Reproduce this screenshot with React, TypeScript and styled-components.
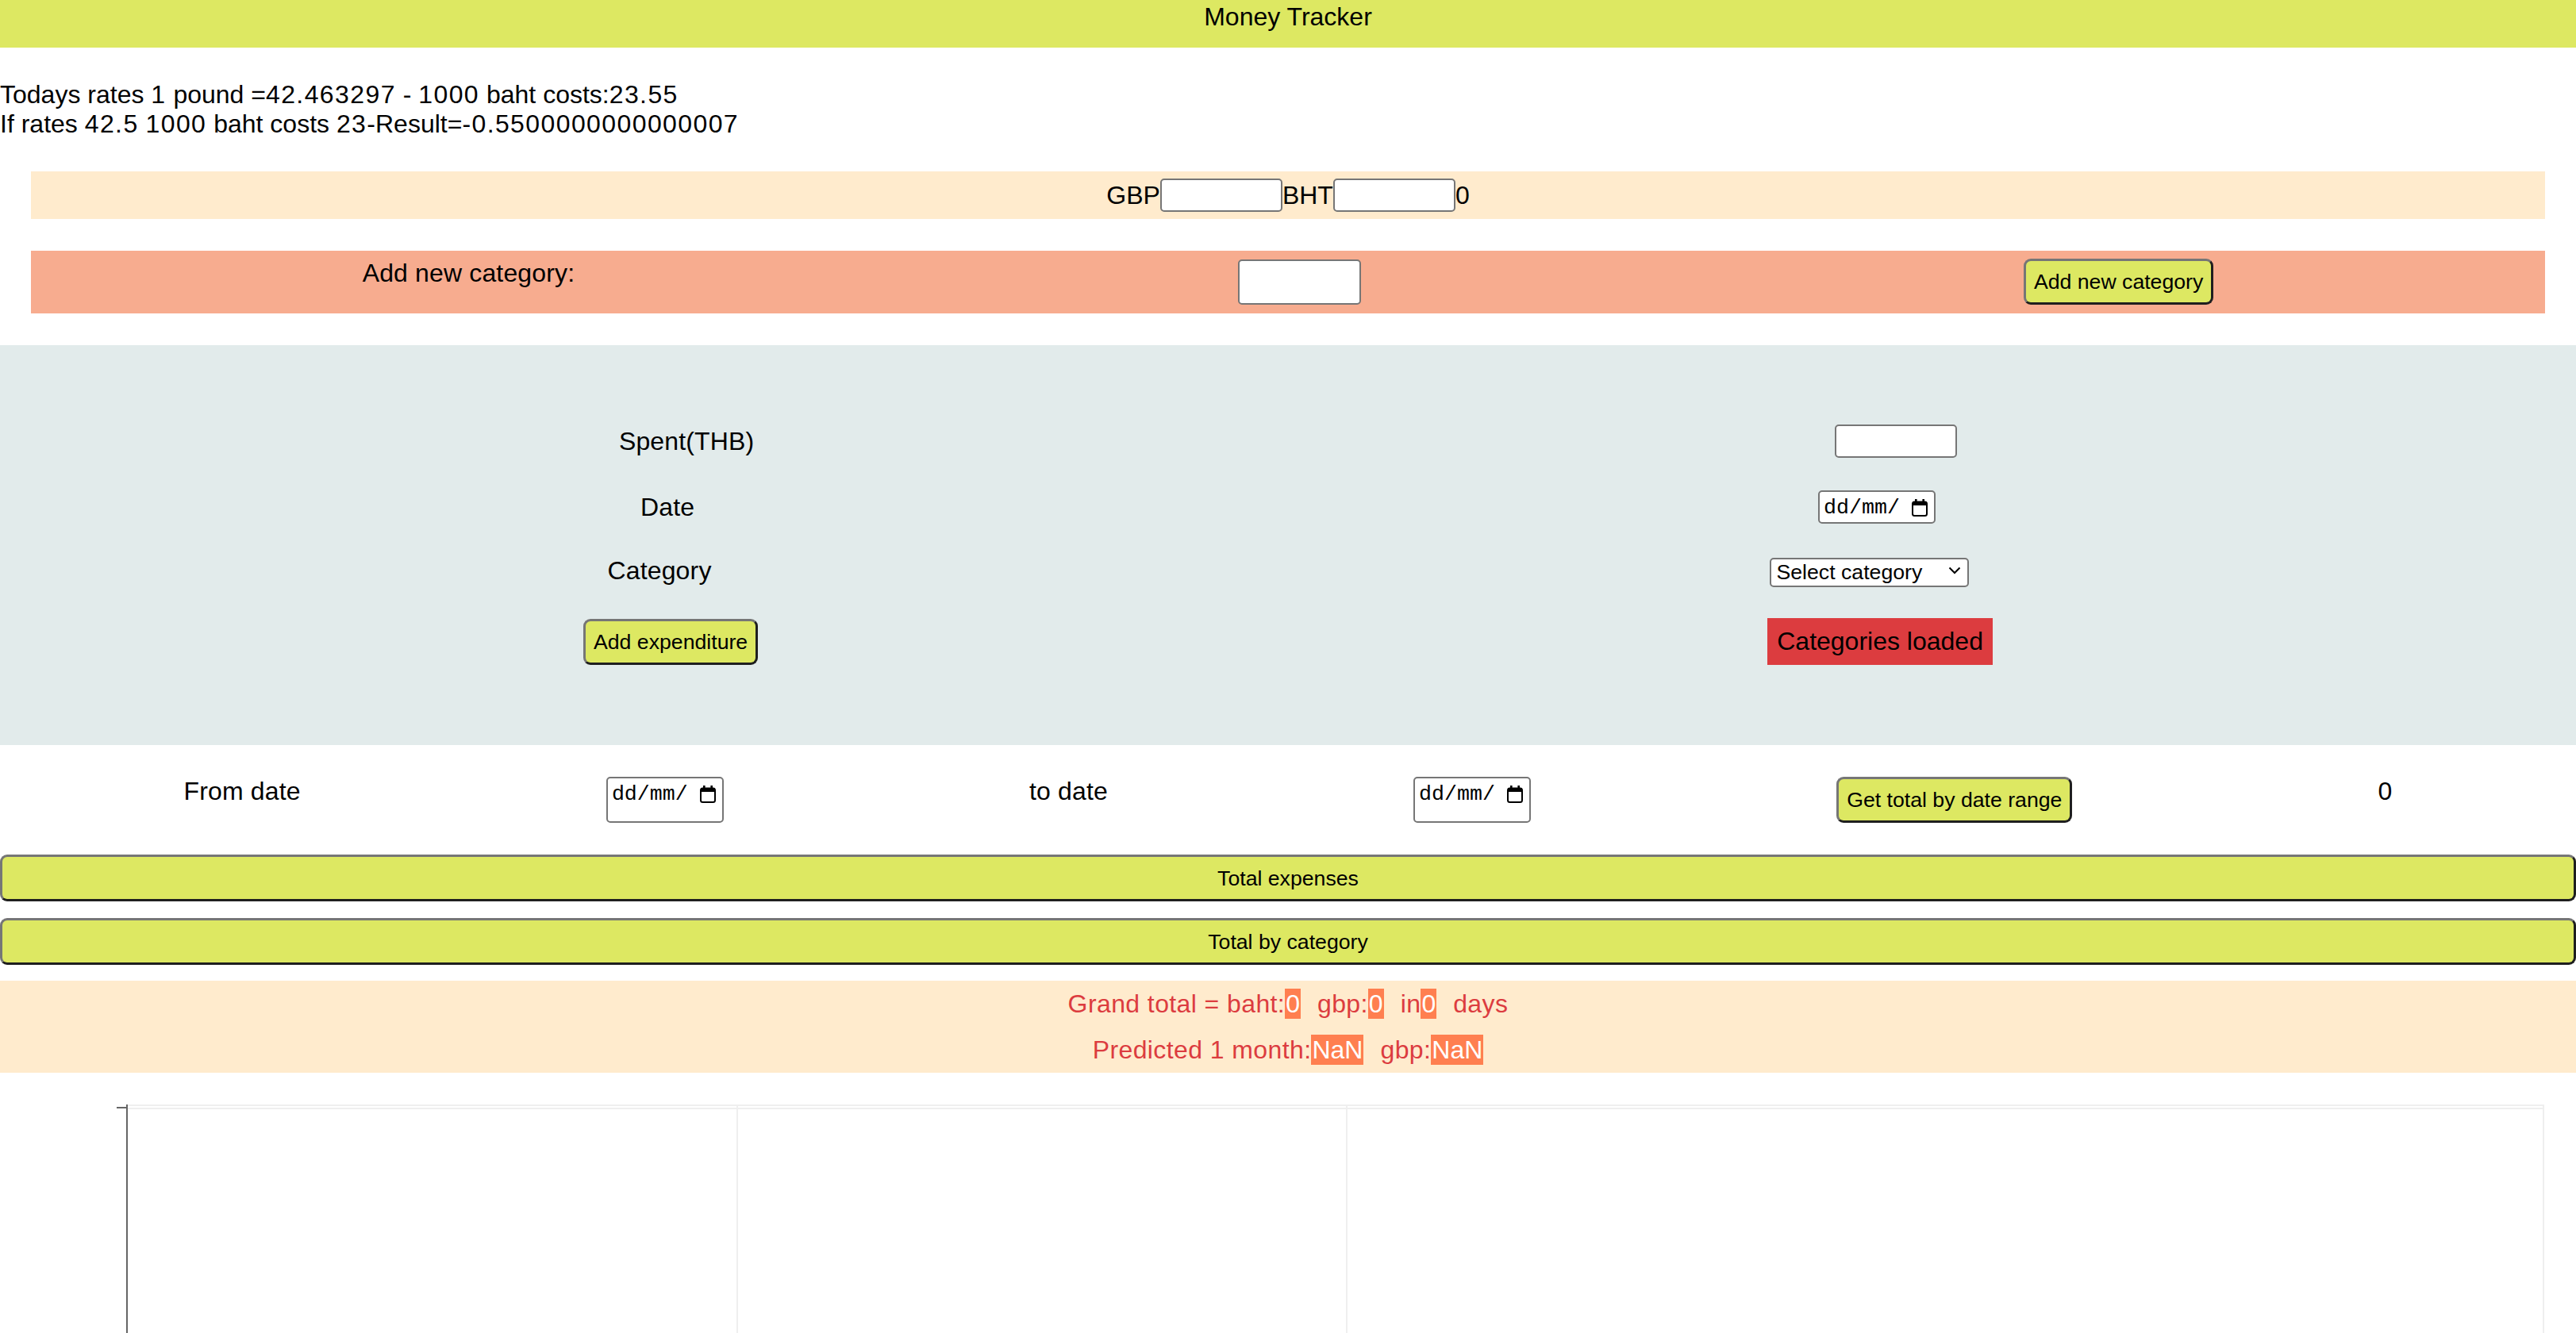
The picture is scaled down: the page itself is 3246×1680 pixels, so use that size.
import React from "react";
import styled, { createGlobalStyle } from "styled-components";

const GlobalStyle = createGlobalStyle`
  html, body {
    margin: 0;
    padding: 0;
    background: #ffffff;
  }
  body {
    font-family: "Liberation Sans", Arial, sans-serif;
    font-size: 32px;
    line-height: 37px;
    color: #000;
  }
  * { box-sizing: border-box; }
`;

const Page = styled.div`
  display: flex;
  flex-direction: column;
`;

const Header = styled.header`
  height: 60px;
  padding-top: 3px;
  background: #dde862;
  text-align: center;
`;

const Rates = styled.div`
  margin: 41px 0;
`;

const Num = styled.span`
  letter-spacing: 1.4px;
`;

const ConverterBar = styled.div`
  margin: 0 39px;
  height: 60px;
  background: #ffebcd;
  display: flex;
  justify-content: center;
  align-items: center;
`;

const TextInput = styled.input<{ $w: number; $h: number }>`
  width: ${(p) => p.$w}px;
  height: ${(p) => p.$h}px;
  margin: 0;
  padding: 2px 6px;
  border: 2px solid #767676;
  border-radius: 5px;
  background: #fff;
  font: 26.67px "Liberation Sans", Arial, sans-serif;
`;

const CategoryBar = styled.div`
  margin: 40px 39px;
  padding: 10px 0 11px;
  background: #f7ac8f;
  display: flex;
  justify-content: space-around;
  align-items: flex-start;
`;

const Label = styled.span`
  display: block;
  white-space: nowrap;
  letter-spacing: 0.15px;
`;

const Button = styled.button`
  height: 58px;
  margin: 0;
  padding: 0 10px;
  font: 26.67px/32px "Liberation Sans", Arial, sans-serif;
  color: #000;
  background: #dde862;
  border: 3px solid;
  border-color: #767676 #1f1f1f #1f1f1f #767676;
  border-radius: 9px;
  white-space: nowrap;
  cursor: pointer;
`;

const WideButton = styled(Button)`
  display: block;
  width: 100%;
  height: 59px;
`;

const ExpenseSection = styled.section`
  background: #e2ebeb;
  padding: 100px 99px 101px;
  display: flex;
  flex-direction: column;
  gap: 41px;
`;

const FormRow = styled.div`
  display: flex;
  justify-content: space-around;
  align-items: center;
`;

const DateBox = styled.div`
  width: 148px;
  min-height: 42px;
  padding: 4px 8px 0 5px;
  border: 2px solid #767676;
  border-radius: 5px;
  background: #fff;
  display: flex;
  align-items: flex-start;
  justify-content: space-between;
`;

const DateText = styled.span`
  font: 26.67px/32px "Liberation Mono", "Courier New", monospace;
  color: #000;
`;

const CalendarIcon = styled.svg`
  margin-top: 5px;
  flex: none;
`;

const SelectWrap = styled.div`
  position: relative;
  width: 251px;
  height: 37px;
`;

const Select = styled.select`
  appearance: none;
  width: 100%;
  height: 100%;
  margin: 0;
  padding: 0 40px 0 7px;
  border: 2px solid #767676;
  border-radius: 5px;
  background: #fff;
  color: #000;
  font: 26.67px "Liberation Sans", Arial, sans-serif;
`;

const Chevron = styled.svg`
  position: absolute;
  right: 10px;
  top: 12px;
  pointer-events: none;
`;

const StatusBadge = styled.div`
  padding: 11px 12px;
  background: #dc3c3f;
  color: #000;
  white-space: nowrap;
`;

const RangeRow = styled.div`
  margin: 40px 39px;
  display: flex;
  justify-content: space-around;
  align-items: stretch;
`;

const WideButtons = styled.div`
  display: flex;
  flex-direction: column;
  gap: 21px;
`;

const Summary = styled.div`
  margin-top: 20px;
  padding: 10px 0;
  background: #ffebcd;
  color: #dc3c3f;
  text-align: center;
  display: flex;
  flex-direction: column;
  gap: 20px;
  letter-spacing: 0.4px;
`;

const SummaryLine = styled.div`
  line-height: 38px;
`;

const Value = styled.span<{ $last?: boolean }>`
  display: inline-block;
  padding: 0 1px;
  margin-right: ${(p) => (p.$last ? 0 : 21)}px;
  background: #ff7f50;
  color: #fff;
  letter-spacing: 0;
`;

const ChartBox = styled.div`
  margin-top: 40px;
  height: 420px;
`;

function DateField() {
  return (
    <DateBox>
      <DateText>dd/mm/</DateText>
      <CalendarIcon width="20" height="22" viewBox="0 0 20 22">
        <rect x="4" y="0" width="2.6" height="5" fill="#000" />
        <rect x="13.4" y="0" width="2.6" height="5" fill="#000" />
        <rect x="1" y="3.5" width="18" height="17.5" rx="2.5" fill="none" stroke="#000" strokeWidth="2" />
        <rect x="1" y="3.5" width="18" height="4.5" fill="#000" />
      </CalendarIcon>
    </DateBox>
  );
}

function Chart() {
  const left = 160;
  const right = 3205;
  const verticals = [929, 1697];
  return (
    <svg width="3246" height="420" viewBox="0 0 3246 420">
      <line x1={left} y1={1} x2={right} y2={1} stroke="#efefef" strokeWidth="2" />
      <line x1={left} y1={5} x2={right} y2={5} stroke="#efefef" strokeWidth="2" />
      {verticals.map((x) => (
        <line key={x} x1={x} y1={0} x2={x} y2={420} stroke="#efefef" strokeWidth="2" />
      ))}
      <line x1={right} y1={0} x2={right} y2={420} stroke="#efefef" strokeWidth="2" />
      <line x1={left} y1={0} x2={left} y2={420} stroke="#666" strokeWidth="2" />
      <line x1={147} y1={4} x2={left} y2={4} stroke="#666" strokeWidth="2" />
    </svg>
  );
}

export default function App() {
  return (
    <Page>
      <GlobalStyle />
      <Header>Money Tracker</Header>
      <Rates>
        <div>
          Todays rates <Num>1</Num> pound =<Num>42.463297</Num> - <Num>1000</Num> baht costs:<Num>23.55</Num>
        </div>
        <div>
          If rates <Num>42.5</Num> <Num>1000</Num> baht costs <Num>23</Num>-Result=<Num>-0.5500000000000007</Num>
        </div>
      </Rates>
      <ConverterBar>
        GBP
        <TextInput $w={154} $h={42} type="text" />
        BHT
        <TextInput $w={154} $h={42} type="text" />
        0
      </ConverterBar>
      <CategoryBar>
        <Label>Add new category:</Label>
        <TextInput $w={155} $h={57} type="text" style={{ marginTop: 1 }} />
        <Button>Add new category</Button>
      </CategoryBar>
      <ExpenseSection>
        <FormRow>
          <Label>Spent(THB)</Label>
          <TextInput $w={154} $h={42} type="text" />
        </FormRow>
        <FormRow>
          <Label>Date</Label>
          <DateField />
        </FormRow>
        <FormRow>
          <Label>Category</Label>
          <SelectWrap>
            <Select defaultValue="">
              <option value="">Select category</option>
            </Select>
            <Chevron width="16" height="12" viewBox="0 0 16 12">
              <polyline points="1.5,2.5 8,9 14.5,2.5" fill="none" stroke="#000" strokeWidth="2" />
            </Chevron>
          </SelectWrap>
        </FormRow>
        <FormRow>
          <Button>Add expenditure</Button>
          <StatusBadge>Categories loaded</StatusBadge>
        </FormRow>
      </ExpenseSection>
      <RangeRow>
        <Label>From date</Label>
        <DateField />
        <Label>to date</Label>
        <DateField />
        <Button>Get total by date range</Button>
        <Label>0</Label>
      </RangeRow>
      <WideButtons>
        <WideButton>Total expenses</WideButton>
        <WideButton>Total by category</WideButton>
      </WideButtons>
      <Summary>
        <SummaryLine>
          Grand total = baht:<Value>0</Value>gbp:<Value>0</Value>in<Value>0</Value>days
        </SummaryLine>
        <SummaryLine>
          Predicted 1 month:<Value>NaN</Value>gbp:<Value $last>NaN</Value>
        </SummaryLine>
      </Summary>
      <ChartBox>
        <Chart />
      </ChartBox>
    </Page>
  );
}
